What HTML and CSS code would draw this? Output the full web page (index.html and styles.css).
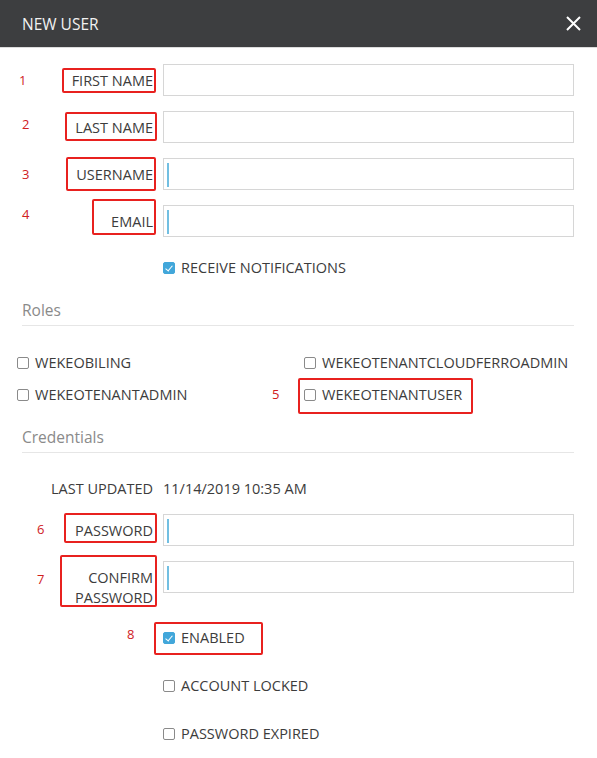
FILE: index.html
```html
<!DOCTYPE html>
<html>
<head>
<meta charset="utf-8">
<link rel="stylesheet" href="styles.css">
</head>
<body>
<div class="dialog">
  <header class="titlebar">
    <span class="title">NEW USER</span>
    <svg class="close" width="15" height="15" viewBox="0 0 15 15"><path d="M1 1L14 14M14 1L1 14" stroke="#fff" stroke-width="2" fill="none"/></svg>
  </header>

  <div class="form">
    <div class="field"><label class="lbl">FIRST NAME</label><div class="input"></div></div>
    <div class="field"><label class="lbl">LAST NAME</label><div class="input"></div></div>
    <div class="field"><label class="lbl">USERNAME</label><div class="input"><span class="caret"></span></div></div>
    <div class="field"><label class="lbl">EMAIL</label><div class="input"><span class="caret"></span></div></div>

    <div class="check-row notif"><span class="cb checked"></span><span>RECEIVE NOTIFICATIONS</span></div>

    <div class="section roles-head">Roles</div>
    <div class="roles">
      <div class="check-row"><span class="cb"></span><span>WEKEOBILING</span></div>
      <div class="check-row"><span class="cb"></span><span>WEKEOTENANTCLOUDFERROADMIN</span></div>
      <div class="check-row"><span class="cb"></span><span>WEKEOTENANTADMIN</span></div>
      <div class="check-row"><span class="cb"></span><span>WEKEOTENANTUSER</span></div>
    </div>

    <div class="section cred-head">Credentials</div>
    <div class="info-row"><span class="lbl-inline">LAST UPDATED</span><span>11/14/2019 10:35 AM</span></div>
    <div class="field pw"><label class="lbl">PASSWORD</label><div class="input"><span class="caret"></span></div></div>
    <div class="field"><label class="lbl">CONFIRM<br>PASSWORD</label><div class="input"><span class="caret"></span></div></div>

    <div class="check-row opt enabled"><span class="cb checked"></span><span>ENABLED</span></div>
    <div class="check-row opt"><span class="cb"></span><span>ACCOUNT LOCKED</span></div>
    <div class="check-row opt"><span class="cb"></span><span>PASSWORD EXPIRED</span></div>
  </div>

  <div class="marks">
    <div class="box" style="left:62px;top:68px;width:94px;height:25px"></div><span class="num" style="left:19px;top:71px">1</span>
    <div class="box" style="left:65px;top:112px;width:92px;height:29px"></div><span class="num" style="left:22px;top:115px">2</span>
    <div class="box" style="left:66px;top:157px;width:90px;height:34px"></div><span class="num" style="left:22px;top:165px">3</span>
    <div class="box" style="left:92px;top:199px;width:64px;height:36px"></div><span class="num" style="left:22px;top:205px">4</span>
    <div class="box" style="left:298px;top:378px;width:175px;height:36px"></div><span class="num" style="left:272px;top:385px">5</span>
    <div class="box" style="left:64px;top:513px;width:93px;height:30px"></div><span class="num" style="left:37px;top:520px">6</span>
    <div class="box" style="left:60px;top:555px;width:97px;height:52px"></div><span class="num" style="left:37px;top:570px">7</span>
    <div class="box" style="left:154px;top:622px;width:109px;height:33px"></div><span class="num" style="left:127px;top:625px">8</span>
  </div>
</div>
</body>
</html>
```

FILE: styles.css
```css
* { box-sizing: border-box; }
html, body { margin: 0; padding: 0; background: #fff; }
body {
  font-family: "Open Sans", "Noto Sans", sans-serif;
  font-size: 14.5px;
  color: #3c3c3c;
}
.dialog { position: relative; width: 597px; height: 758px; overflow: hidden; }

.titlebar {
  height: 48px;
  background: #3d3e40;
  border-bottom: 1px solid #dcdcdc;
  display: flex;
  align-items: center;
  justify-content: space-between;
  padding: 0 16px 0 22px;
}
.title { color: #f2f2f2; font-size: 15.5px; line-height: 20px; }
.close { display: block; margin-top: -1px; }

.form { padding-top: 16px; }

.field {
  display: grid;
  grid-template-columns: 153px 411px;
  column-gap: 10px;
  margin-bottom: 15px;
}
.lbl {
  text-align: right;
  line-height: 20px;
  padding-top: 7px;
}
.input {
  height: 32px;
  border: 1px solid #d6d6d6;
  background: #fff;
  padding: 4px 3px;
}
.caret { display: block; width: 2px; height: 24px; background: #72bfe2; }

.check-row { display: flex; align-items: center; line-height: 20px; gap: 6px; }
.notif { margin-top: 21px; padding-left: 163px; }

.cb {
  width: 12px; height: 12px;
  border: 1px solid #8a8a8a;
  border-radius: 2px;
  background: #fff;
  flex: none;
  position: relative;
}
.cb.checked { background: #42a7da; border-color: #42a7da; }
.cb.checked::after {
  content: "";
  position: absolute;
  left: 3px; top: 1px;
  width: 3px; height: 6px;
  border: solid #fff;
  border-width: 0 1.5px 1.5px 0;
  transform: rotate(40deg);
}

.section {
  margin-left: 22px;
  margin-right: 23px;
  font-size: 15.5px;
  line-height: 20px;
  color: #8a8a8a;
  padding-bottom: 5px;
  border-bottom: 1px solid #e6e6e6;
}
.roles-head { margin-top: 22px; }
.roles {
  display: grid;
  grid-template-columns: 287px 1fr;
  row-gap: 12px;
  padding-left: 17px;
  margin-top: 27px;
}
.roles .check-row { gap: 6px; }
.cred-head { margin-top: 22px; padding-bottom: 5px; }

.info-row {
  display: grid;
  grid-template-columns: 153px auto;
  column-gap: 10px;
  line-height: 20px;
  margin-top: 26px;
}
.lbl-inline { text-align: right; }
.pw { margin-top: 15px; }

.opt { padding-left: 163px; margin-top: 28px; }
.enabled { margin-top: 20px; }

.marks { position: absolute; inset: 0; pointer-events: none; }
.box {
  position: absolute;
  border: 2px solid #e8211f;
  border-radius: 2px;
}
.num {
  position: absolute;
  color: #d0201e;
  font-size: 13px;
  line-height: 18px;
}
```
